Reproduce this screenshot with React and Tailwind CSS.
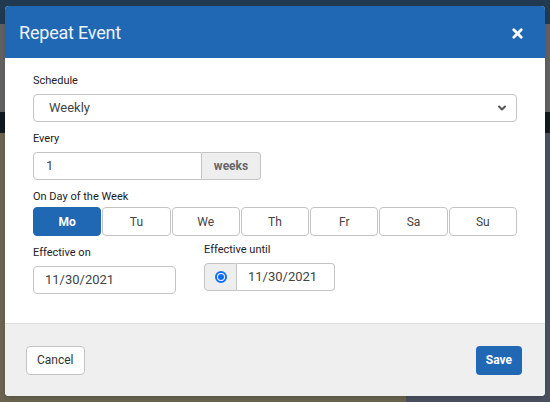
import { X, ChevronDown } from 'lucide-react'

const DAYS = ['Mo', 'Tu', 'We', 'Th', 'Fr', 'Sa', 'Su']

function Backdrop() {
  return (
    <div className="absolute inset-0 flex flex-col">
      <div className="h-[24px] bg-[#213a50]" />
      <div className="h-[88px] bg-[#616161]" />
      <div className="h-[21px] bg-[#111a20]" />
      <div className="flex flex-1">
        <div className="w-[406px] bg-[#6a6450]" />
        <div className="flex-1 bg-[#4b5060]" />
      </div>
    </div>
  )
}

function Label({ children, className = '' }) {
  return <p className={`text-[11px] text-[#222] leading-none ${className}`}>{children}</p>
}

export default function App() {
  return (
    <div
      className="relative w-[550px] h-[402px] overflow-hidden"
      style={{ fontFamily: 'Roboto, "Noto Sans", sans-serif' }}
    >
      <Backdrop />
      <div className="absolute left-[5px] top-[6px] w-[540px] h-[390px] bg-white rounded-[4px] overflow-hidden flex flex-col shadow-md">
        <div className="h-[52px] bg-[#2068b4] flex items-center justify-between pl-[14px] pr-[20px] shrink-0">
          <h1 className="text-[18px] text-[#eef3fa] font-normal tracking-[-0.2px]">Repeat Event</h1>
          <X size={15} strokeWidth={4.5} className="text-white mt-[2px]" />
        </div>

        <div className="px-[28px] pt-[17px] flex-1">
          <Label>Schedule</Label>
          <div className="mt-[8px] h-[28px] w-[484px] border border-[#c4c4c4] rounded-[4px] flex items-center justify-between pl-[15px] pr-[8px]">
            <span className="text-[13px] text-[#444]">Weekly</span>
            <ChevronDown size={12} strokeWidth={4} className="text-[#555]" />
          </div>

          <Label className="mt-[11px]">Every</Label>
          <div className="mt-[8px] flex h-[28px] w-[228px]">
            <div className="flex-1 border border-[#c4c4c4] rounded-l-[4px] flex items-center pl-[12px] text-[13px] text-[#444]">1</div>
            <div className="w-[59px] border border-l-0 border-[#c4c4c4] rounded-r-[4px] bg-[#eeeeee] flex items-center justify-center text-[12px] font-bold text-[#666]">
              weeks
            </div>
          </div>

          <Label className="mt-[11px]">On Day of the Week</Label>
          <div className="mt-[5px] grid grid-cols-7 gap-[1px] w-[484px]">
            {DAYS.map((d, i) => (
              <div
                key={d}
                className={
                  i === 0
                    ? 'h-[29px] rounded-[4px] bg-[#2068b4] border border-[#2068b4] text-white font-bold text-[12px] flex items-center justify-center'
                    : 'h-[29px] rounded-[4px] bg-white border border-[#c4c4c4] text-[#444] text-[12px] flex items-center justify-center'
                }
              >
                {d}
              </div>
            ))}
          </div>

          <div className="mt-[8px] flex">
            <div className="w-[171px]">
              <Label className="mt-[3px]">Effective on</Label>
              <div className="mt-[8px] h-[28px] w-[143px] border border-[#c4c4c4] rounded-[4px] flex items-center pl-[11px] text-[13px] text-[#444]">
                11/30/2021
              </div>
            </div>
            <div>
              <Label>Effective until</Label>
              <div className="mt-[8px] flex h-[28px] w-[131px]">
                <div className="w-[33px] border border-[#c4c4c4] rounded-l-[4px] bg-[#eeeeee] flex items-center justify-center">
                  <span className="w-[12px] h-[12px] rounded-full border-[2px] border-[#0d6efd] bg-white flex items-center justify-center">
                    <span className="w-[6px] h-[6px] rounded-full bg-[#0d6efd]" />
                  </span>
                </div>
                <div className="flex-1 border border-l-0 border-[#c4c4c4] rounded-r-[4px] flex items-center pl-[11px] text-[13px] text-[#444]">
                  11/30/2021
                </div>
              </div>
            </div>
          </div>
        </div>

        <div className="h-[73px] bg-[#efefef] border-t border-[#e0e0e0] flex items-center justify-between pl-[21px] pr-[23px] shrink-0">
          <button className="h-[29px] px-[10px] bg-white border border-[#c4c4c4] rounded-[4px] text-[12px] text-[#333]">
            Cancel
          </button>
          <button className="h-[29px] px-[10px] bg-[#2068b4] rounded-[4px] text-[12px] font-bold text-white">
            Save
          </button>
        </div>
      </div>
    </div>
  )
}
